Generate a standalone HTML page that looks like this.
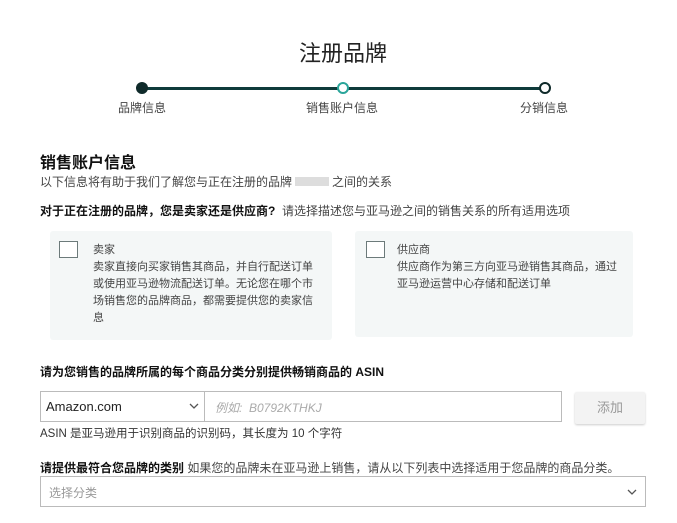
<!DOCTYPE html><html><head><meta charset="utf-8"><style>
body{margin:0;width:677px;height:523px;background:#fff;font-family:"Liberation Sans","Noto Sans CJK SC",sans-serif;color:#333;position:relative;overflow:hidden}
.a{position:absolute;white-space:nowrap}
.box{position:absolute;background:#f4f7f7;border-radius:3px}
.cb{position:absolute;width:17px;height:15px;border:1px solid #6c7a7a;background:#fff}
.t{font-size:11px;line-height:17px;color:#444}
</style></head><body>
<div class="a" style="left:0;width:686px;text-align:center;top:36px;font-size:22px;color:#222">注册品牌</div>
<div class="a" style="left:142px;top:87px;width:403px;height:3px;background:#0f3b3b"></div>
<div class="a" style="left:136px;top:82px;width:12px;height:12px;border-radius:50%;background:#0f2a2a"></div>
<div class="a" style="left:337px;top:82px;width:8px;height:8px;border-radius:50%;background:#fff;border:2px solid #2aa59a"></div>
<div class="a" style="left:539px;top:82px;width:8px;height:8px;border-radius:50%;background:#fff;border:2px solid #0f2a2a"></div>
<div class="a" style="left:118px;top:99px;font-size:12px;color:#444">品牌信息</div>
<div class="a" style="left:306px;top:99px;font-size:12px;color:#444">销售账户信息</div>
<div class="a" style="left:520px;top:99px;font-size:12px;color:#444">分销信息</div>
<div class="a" style="left:40px;top:149px;font-size:16px;font-weight:bold;color:#111">销售账户信息</div>
<div class="a" style="left:40px;top:173px;font-size:12px;color:#444">以下信息将有助于我们了解您与正在注册的品牌<span style="display:inline-block;width:34px;height:9px;background:#ddd;margin:0 3px"></span>之间的关系</div>
<div class="a" style="left:40px;top:202px;font-size:12px;color:#444"><b style="color:#111">对于正在注册的品牌，您是卖家还是供应商?</b>&nbsp; 请选择描述您与亚马逊之间的销售关系的所有适用选项</div>
<div class="box" style="left:50px;top:231px;width:282px;height:109px"></div>
<div class="box" style="left:355px;top:231px;width:278px;height:106px"></div>
<div class="cb" style="left:59px;top:241px"></div>
<div class="cb" style="left:366px;top:241px"></div>
<div class="a t" style="left:93px;top:242px;white-space:normal;width:226px">卖家<br>卖家直接向买家销售其商品，并自行配送订单或使用亚马逊物流配送订单。无论您在哪个市场销售您的品牌商品，都需要提供您的卖家信息</div>
<div class="a t" style="left:397px;top:242px;white-space:normal;width:226px">供应商<br>供应商作为第三方向亚马逊销售其商品，通过亚马逊运营中心存储和配送订单</div>
<div class="a" style="left:40px;top:363px;font-size:12px;font-weight:bold;color:#111">请为您销售的品牌所属的每个商品分类分别提供畅销商品的 ASIN</div>
<div class="a" style="left:40px;top:391px;width:165px;height:31px;border:1px solid #bbb;box-sizing:border-box;background:#fff"></div>
<div class="a" style="left:46px;top:399px;font-size:13px;color:#222">Amazon.com</div>
<svg class="a" style="left:189px;top:403px" width="10" height="7"><path d="M1 1l4 4 4-4" fill="none" stroke="#555" stroke-width="1.3"/></svg>
<div class="a" style="left:204px;top:391px;width:358px;height:31px;border:1px solid #bbb;box-sizing:border-box"></div>
<div class="a" style="left:215px;top:399px;font-size:12px;color:#aaa;font-style:italic">例如:&nbsp; B0792KTHKJ</div>
<div class="a" style="left:575px;top:392px;width:70px;height:32px;background:#f3f3f3;border-radius:2px;box-shadow:0 1px 2px #ccc;text-align:center;line-height:32px;font-size:13px;color:#999">添加</div>
<div class="a" style="left:40px;top:425px;font-size:11.5px;color:#333">ASIN 是亚马逊用于识别商品的识别码，其长度为 10 个字符</div>
<div class="a" style="left:40px;top:459px;font-size:12px;color:#444"><b style="color:#111">请提供最符合您品牌的类别</b> 如果您的品牌未在亚马逊上销售，请从以下列表中选择适用于您品牌的商品分类。</div>
<div class="a" style="left:40px;top:476px;width:606px;height:31px;border:1px solid #bbb;box-sizing:border-box"></div>
<div class="a" style="left:49px;top:484px;font-size:12px;color:#999">选择分类</div>
<svg class="a" style="left:627px;top:489px" width="10" height="7"><path d="M1 1l4 4 4-4" fill="none" stroke="#555" stroke-width="1.3"/></svg>
</body></html>
